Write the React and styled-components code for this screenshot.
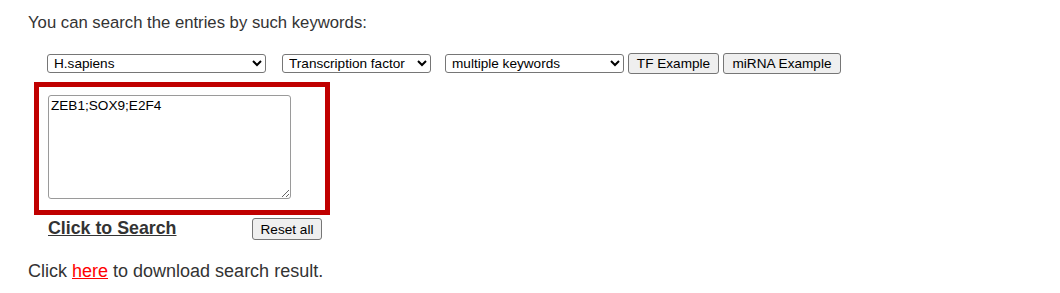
import React from "react";
import styled, { createGlobalStyle } from "styled-components";

const Global = createGlobalStyle`
  html, body { margin: 0; padding: 0; background: #ffffff; }
  body { font-family: "Liberation Sans", Arial, sans-serif; color: #333333; }
`;

const Page = styled.div`
  padding: 13px 0 0 28px;
  width: 1032px;
  height: 280px;
`;

const Lead = styled.p`
  margin: 0;
  font-size: 16.7px;
  line-height: 20px;
`;

const Controls = styled.div`
  display: flex;
  align-items: center;
  margin: 20px 0 0 19px;
  height: 21px;
`;

const Select = styled.select`
  width: ${(p) => p.$w}px;
  height: 19px;
  margin-right: ${(p) => p.$gap}px;
  font-family: "Liberation Sans", Arial, sans-serif;
  font-size: 13.6px;
  color: #000;
  background: #fff;
  border: 1px solid #767676;
  border-radius: 3px;
  padding: 0 0 0 2px;
`;

const Btn = styled.button`
  height: 21px;
  width: ${(p) => p.$w}px;
  padding: 0;
  margin-right: ${(p) => p.$gap || 0}px;
  font-family: "Liberation Sans", Arial, sans-serif;
  font-size: 13.6px;
  color: #000;
  background: #efefef;
  border: 1px solid #767676;
  border-radius: 3px;
`;

const Frame = styled.div`
  box-sizing: border-box;
  margin: 8px 0 0 6px;
  width: 296px;
  height: 133px;
  border: 5px solid #c00000;
  padding: 8px 0 0 9px;
`;

const Area = styled.textarea`
  display: block;
  box-sizing: border-box;
  width: 243px;
  height: 104px;
  margin: 0;
  padding: 2px;
  font-family: "Liberation Sans", Arial, sans-serif;
  font-size: 13.6px;
  color: #000;
  border: 1px solid #9a9a9a;
  border-radius: 3px;
  resize: both;
`;

const ActionRow = styled.div`
  display: flex;
  align-items: flex-start;
  justify-content: space-between;
  margin: 4px 0 0 20px;
  width: 274px;
`;

const SearchLink = styled.a`
  font-size: 17.8px;
  font-weight: bold;
  color: #333333;
  text-decoration: underline;
  line-height: 18px;
  cursor: pointer;
`;

const ResetBtn = styled(Btn)`
  height: 22px;
  margin-top: -1px;
`;

const Note = styled.p`
  margin: 20px 0 0 0;
  font-size: 18px;
  line-height: 22px;
`;

const RedLink = styled.a`
  color: #ff0000;
  text-decoration: underline;
  cursor: pointer;
`;

export default function App() {
  return (
    <>
      <Global />
      <Page>
        <Lead>You can search the entries by such keywords:</Lead>
        <Controls>
          <Select $w={219} $gap={16} defaultValue="hs">
            <option value="hs">H.sapiens</option>
          </Select>
          <Select $w={149} $gap={14} defaultValue="tf">
            <option value="tf">Transcription factor</option>
          </Select>
          <Select $w={179} $gap={4} defaultValue="mk">
            <option value="mk">multiple keywords</option>
          </Select>
          <Btn $w={91} $gap={4}>TF Example</Btn>
          <Btn $w={118}>miRNA Example</Btn>
        </Controls>
        <Frame>
          <Area defaultValue="ZEB1;SOX9;E2F4" />
        </Frame>
        <ActionRow>
          <SearchLink>Click to Search</SearchLink>
          <ResetBtn $w={70}>Reset all</ResetBtn>
        </ActionRow>
        <Note>
          Click <RedLink>here</RedLink> to download search result.
        </Note>
      </Page>
    </>
  );
}
